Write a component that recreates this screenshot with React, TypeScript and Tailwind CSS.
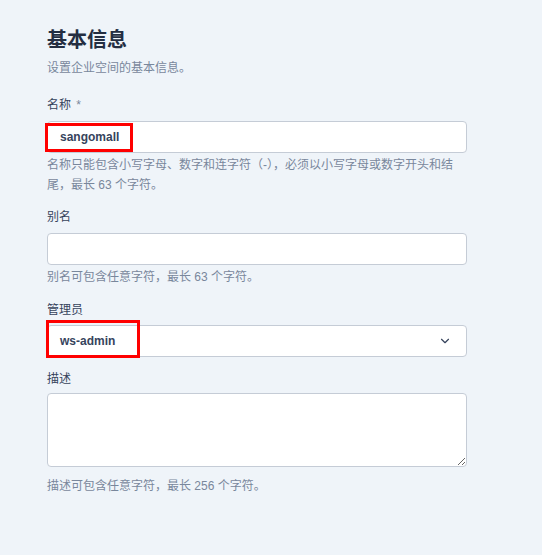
import React from "react";
import { ChevronDown } from "lucide-react";

const font = { fontFamily: '"Liberation Sans", "Noto Sans CJK SC", sans-serif' };

export default function App() {
  return (
    <div
      className="min-h-[555px] w-full bg-[#eff4f9] pl-[47px] pt-[26px] text-[12px] text-[#36435c]"
      style={font}
    >
      <div className="w-[420px]">
        {/* 标题 */}
        <h1 className="text-[20px] font-bold leading-[28px] text-[#242e42]">基本信息</h1>
        <p className="mt-[4px] leading-[20px] text-[#79879c]">设置企业空间的基本信息。</p>

        {/* 名称 */}
        <div className="mt-[17px]">
          <label className="block leading-[20px]">
            名称 <span className="ml-[2px] text-[#79879c]">*</span>
          </label>
          <div className="relative mt-[6px]">
            <div className="flex h-[32px] items-center rounded-[4px] border border-[#c5ccd6] bg-white px-[12px] font-bold text-[#36435c]">
              sangomall
            </div>
            <div className="pointer-events-none absolute left-[-2px] top-[2px] h-[29px] w-[88px] border-[3px] border-[#ff0000]" />
          </div>
          <p className="mt-[2px] leading-[20px] text-[#79879c]">
            名称只能包含小写字母、数字和连字符（-），必须以小写字母或数字开头和结尾，最长 63 个字符。
          </p>
        </div>

        {/* 别名 */}
        <div className="mt-[12px]">
          <label className="block leading-[20px]">别名</label>
          <div className="mt-[6px] h-[32px] rounded-[4px] border border-[#c5ccd6] bg-white" />
          <p className="mt-[2px] leading-[20px] text-[#79879c]">别名可包含任意字符，最长 63 个字符。</p>
        </div>

        {/* 管理员 */}
        <div className="mt-[13px]">
          <label className="block leading-[20px]">管理员</label>
          <div className="relative mt-[5px]">
            <div className="flex h-[32px] items-center justify-between rounded-[4px] border border-[#c5ccd6] bg-white pl-[12px] pr-[14px] font-bold text-[#36435c]">
              <span>ws-admin</span>
              <ChevronDown size={14} strokeWidth={2} className="text-[#36435c]" />
            </div>
            <div className="pointer-events-none absolute left-[-1px] top-[-5px] h-[38px] w-[94px] border-[3px] border-[#ff0000]" />
          </div>
        </div>

        {/* 描述 */}
        <div className="mt-[12px]">
          <label className="block leading-[20px]">描述</label>
          <textarea className="mt-[4px] block h-[74px] w-full rounded-[4px] border border-[#c5ccd6] bg-white px-[12px] py-[6px] outline-none" />
          <p className="mt-[9px] leading-[20px] text-[#79879c]">描述可包含任意字符，最长 256 个字符。</p>
        </div>
      </div>
    </div>
  );
}
